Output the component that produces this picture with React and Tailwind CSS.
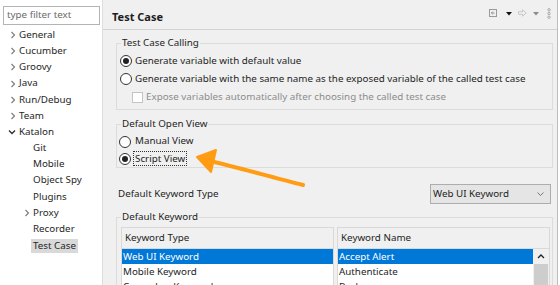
import React from 'react';

const tree = [
  { label: 'General', level: 0, chevron: 'right' },
  { label: 'Cucumber', level: 0, chevron: 'right' },
  { label: 'Groovy', level: 0, chevron: 'right' },
  { label: 'Java', level: 0, chevron: 'right' },
  { label: 'Run/Debug', level: 0, chevron: 'right' },
  { label: 'Team', level: 0, chevron: 'right' },
  { label: 'Katalon', level: 0, chevron: 'down' },
  { label: 'Git', level: 1 },
  { label: 'Mobile', level: 1 },
  { label: 'Object Spy', level: 1 },
  { label: 'Plugins', level: 1 },
  { label: 'Proxy', level: 1, chevron: 'right' },
  { label: 'Recorder', level: 1 },
  { label: 'Test Case', level: 1, selected: true },
];

function Chevron({ dir }) {
  if (dir === 'down') {
    return (
      <svg width="8" height="6" viewBox="0 0 8 6" className="-ml-[1px]">
        <path d="M1 1.5 L4 4.5 L7 1.5" fill="none" stroke="#2b2b2b" strokeWidth="1.3" />
      </svg>
    );
  }
  return (
    <svg width="6" height="8" viewBox="0 0 6 8" className="ml-[1px]">
      <path d="M1.5 1 L4.5 4 L1.5 7" fill="none" stroke="#7a7a7a" strokeWidth="1.1" />
    </svg>
  );
}

function Radio({ checked }) {
  return (
    <span className="w-[12px] h-[12px] shrink-0 rounded-full border border-[#333] bg-white flex items-center justify-center">
      {checked && <span className="w-[6px] h-[6px] rounded-full bg-[#222]" />}
    </span>
  );
}

function KeywordTable({ title, rows, scroll }) {
  return (
    <div className="w-[213px] border border-[#d9d9d9] flex flex-col">
      <div className="h-[21px] border-b border-[#d9d9d9] bg-[#f0f0f0] flex items-center pl-[3px]">{title}</div>
      <div className="flex bg-white">
        <div className="flex-1 flex flex-col">
          {rows.map((r, i) => (
            <div
              key={r}
              className={
                i === 0
                  ? 'h-[15px] leading-[15px] pl-[1px] bg-[#0078d7] text-white'
                  : 'h-[15px] leading-[15px] pl-[1px]'
              }
            >
              {r}
            </div>
          ))}
        </div>
        {scroll && (
          <div className="w-[16px] bg-[#f0f0f0] flex flex-col items-center">
            <div className="h-[15px] flex items-center justify-center">
              <svg width="8" height="5" viewBox="0 0 8 5">
                <path d="M1 4 L4 1 L7 4" fill="none" stroke="#222" strokeWidth="1.3" />
              </svg>
            </div>
            <div className="w-[14px] h-[30px] bg-[#cdcdcd]" />
          </div>
        )}
      </div>
    </div>
  );
}

export default function App() {
  return (
    <div className="relative w-[560px] h-[285px] overflow-hidden flex bg-white text-[9.8px] text-[#1e1e1e] font-['Noto_Sans',sans-serif]">
      {/* left tree */}
      <div className="w-[103px] shrink-0 bg-white border-r border-[#dedede] pt-[6px] flex flex-col">
        <div className="ml-[3px] w-[97px] h-[19px] border border-[#b4b4b4] flex items-center pl-[3px] text-[#6b6b6b]">
          type filter text
        </div>
        <div className="mt-[2px] flex flex-col text-[#262626]">
          {tree.map((t) => (
            <div
              key={t.label}
              className={t.level === 0 ? 'h-[16.2px] flex items-center pl-[9px]' : 'h-[16.2px] flex items-center pl-[23px]'}
            >
              <span className="w-[10px] shrink-0 flex items-center">{t.chevron && <Chevron dir={t.chevron} />}</span>
              {t.selected ? (
                <span className="bg-[#d9d9d9] -ml-[2px] px-[2px] h-[14px] leading-[14px]">{t.label}</span>
              ) : (
                <span>{t.label}</span>
              )}
            </div>
          ))}
        </div>
      </div>

      {/* right page */}
      <div className="w-[455px] shrink-0 bg-[#f0f0f0] border-r border-[#bdbdbd] flex flex-col">
        <div className="h-[30px] shrink-0 border-b border-[#d2d2d2] flex">
          <div className="pl-[9px] pt-[9px] font-bold text-[11px] leading-[16px]">Test Case</div>
          <div className="ml-auto flex items-start pt-[9px] pr-[6px]">
            <svg width="8" height="8" viewBox="0 0 8 8">
              <rect x="0.5" y="0.5" width="7" height="7" fill="none" stroke="#9a9a9a" />
              <path d="M5.5 4 H2.5 M3.8 2.6 L2.4 4 L3.8 5.4" fill="none" stroke="#8a8a8a" strokeWidth="0.9" />
            </svg>
            <svg width="6" height="4" viewBox="0 0 6 4" className="ml-[9px] mt-[3px]">
              <path d="M0 0 H6 L3 3.5 Z" fill="#111" />
            </svg>
            <svg width="9" height="8" viewBox="0 0 9 8" className="ml-[6px]">
              <path d="M0.5 2.7 H4.5 V0.8 L8.2 4 L4.5 7.2 V5.3 H0.5 Z" fill="none" stroke="#c4c4c4" strokeWidth="0.9" />
            </svg>
            <svg width="6" height="4" viewBox="0 0 6 4" className="ml-[6px] mt-[3px]">
              <path d="M0 0 H6 L3 3.5 Z" fill="#8a8a8a" />
            </svg>
            <svg width="4" height="11" viewBox="0 0 4 11" className="ml-[8px] -mt-[1px]">
              <circle cx="2" cy="1.8" r="1.2" fill="none" stroke="#999" strokeWidth="0.8" />
              <circle cx="2" cy="5.5" r="1.2" fill="none" stroke="#999" strokeWidth="0.8" />
              <circle cx="2" cy="9.2" r="1.2" fill="none" stroke="#999" strokeWidth="0.8" />
            </svg>
          </div>
        </div>

        <div className="flex flex-col pl-[13px] pr-[4px]">
          <fieldset className="mt-[5px] border border-[#dcdcdc] pb-[3px]">
            <legend className="ml-[4px] px-[1px] leading-[16px]">Test Case Calling</legend>
            <div className="pt-[1px] pl-[3px] flex flex-col">
              <div className="h-[18px] flex items-center gap-[3px]">
                <Radio checked />
                <span>Generate variable with default value</span>
              </div>
              <div className="h-[18px] flex items-center gap-[3px]">
                <Radio />
                <span>Generate variable with the same name as the exposed variable of the called test case</span>
              </div>
              <div className="h-[18px] flex items-center gap-[3px] pl-[12px]">
                <span className="w-[11px] h-[11px] border border-[#c4c4c4] bg-white shrink-0" />
                <span className="text-[#8c8c8c]">Expose variables automatically after choosing the called test case</span>
              </div>
            </div>
          </fieldset>

          <fieldset className="mt-[6px] border border-[#dcdcdc]">
            <legend className="ml-[4px] px-[1px] leading-[16px]">Default Open View</legend>
            <div className="pt-[1px] pl-[2px] flex flex-col">
              <div className="h-[17px] flex items-center gap-[4px]">
                <Radio />
                <span>Manual View</span>
              </div>
              <div className="h-[17px] flex items-center gap-[2px]">
                <Radio checked />
                <span className="border border-dotted border-[#333] px-[1px] leading-[13px]">Script View</span>
              </div>
            </div>
          </fieldset>

          <div className="mt-[16px] h-[20px] flex items-center">
            <span className="pl-[2px]">Default Keyword Type</span>
            <div className="ml-auto mr-[2px] w-[121px] h-[20px] bg-[#e5e5e5] border border-[#adadad] flex items-center pl-[2px]">
              <span>Web UI Keyword</span>
              <svg width="7" height="4" viewBox="0 0 7 4" className="ml-auto mr-[6px]">
                <path d="M0.5 0.5 L3.5 3.5 L6.5 0.5" fill="none" stroke="#6a6a6a" strokeWidth="0.9" />
              </svg>
            </div>
          </div>

          <fieldset className="mt-[5px] border border-[#dcdcdc]">
            <legend className="ml-[4px] px-[1px] leading-[16px]">Default Keyword</legend>
            <div className="pt-[2px] pl-[4px] flex gap-[3px]">
              <KeywordTable
                title="Keyword Type"
                rows={['Web UI Keyword', 'Mobile Keyword', 'Cucumber Keywords', 'Windows Keyword']}
              />
              <KeywordTable title="Keyword Name" rows={['Accept Alert', 'Authenticate', 'Back', 'Check']} scroll />
            </div>
          </fieldset>
        </div>
      </div>

      {/* annotation arrow */}
      <svg className="absolute left-0 top-0 pointer-events-none" width="560" height="285" viewBox="0 0 560 285">
        <path d="M303 185 C 275 178, 240 168, 210 161" fill="none" stroke="#ff9c14" strokeWidth="4" strokeLinecap="round" />
        <path d="M197 157 L216 150 L211 172 Z" fill="#ff9c14" stroke="#ff9c14" strokeWidth="2" strokeLinejoin="round" />
      </svg>
    </div>
  );
}
